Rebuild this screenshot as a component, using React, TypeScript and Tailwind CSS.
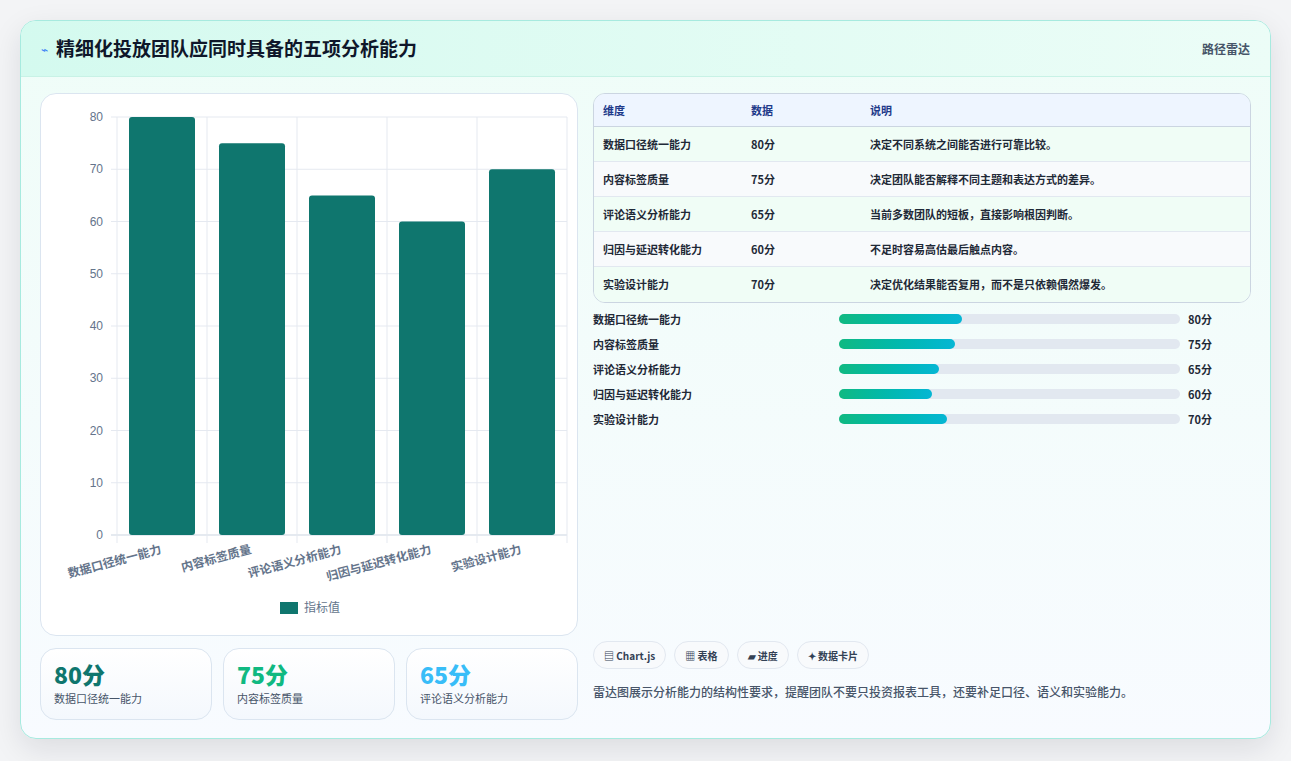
import React from 'react';

const rows = [
  { name: '数据口径统一能力', v: 80, note: '决定不同系统之间能否进行可靠比较。', w: 36 },
  { name: '内容标签质量', v: 75, note: '决定团队能否解释不同主题和表达方式的差异。', w: 34 },
  { name: '评论语义分析能力', v: 65, note: '当前多数团队的短板，直接影响根因判断。', w: 29.3 },
  { name: '归因与延迟转化能力', v: 60, note: '不足时容易高估最后触点内容。', w: 27.3 },
  { name: '实验设计能力', v: 70, note: '决定优化结果能否复用，而不是只依赖偶然爆发。', w: 31.7 },
];

const font = { fontFamily: '"Noto Sans CJK SC", "Noto Sans", sans-serif' };

function Chart() {
  const y0 = 534;
  const k = 418 / 80;
  return (
    <svg width="538" height="543" viewBox="40 93 538 543" style={font}>
      {[0, 10, 20, 30, 40, 50, 60, 70, 80].map((t) => (
        <g key={t}>
          <line x1="110" x2="566" y1={y0 - t * k} y2={y0 - t * k} stroke={t === 0 ? '#cbd5e1' : '#e5e9f0'} />
          <text x="102" y={y0 - t * k + 4} textAnchor="end" fontSize="12" fill="#64748b" fontFamily="Liberation Sans, sans-serif">{t}</text>
        </g>
      ))}
      {[116, 206, 296, 386, 476, 566].map((x) => (
        <line key={x} x1={x} x2={x} y1="116" y2="542" stroke="#e5e9f0" />
      ))}
      {rows.map((r, i) => {
        const cx = 161 + i * 90;
        const h = r.v * k;
        return (
          <g key={r.name}>
            <rect x={cx - 33} y={y0 - h} width="66" height={h} rx="3" fill="#0f766e" />
            <text x={cx} y="552" textAnchor="end" fontSize="12" fontWeight="600" fill="#64748b" transform={`rotate(-15 ${cx} 552)`}>{r.name}</text>
          </g>
        );
      })}
      <rect x="279" y="601" width="18" height="12" fill="#0f766e" />
      <text x="303" y="611" fontSize="12" fill="#64748b">指标值</text>
    </svg>
  );
}

export default function App() {
  return (
    <div className="min-h-[761px] bg-[#f3f4f6] p-5" style={font}>
      <div className="h-[719px] w-[1251px] overflow-hidden rounded-2xl border border-[#a7eadf] bg-gradient-to-b from-[#effdf8] to-[#f8fbff] shadow-[0_10px_30px_rgba(15,23,42,0.10)]">
        <div className="flex h-[56px] items-center justify-between border-b border-[#c8f2e6] bg-gradient-to-r from-[#d4faef] to-[#ecfdf7] px-5">
          <div className="flex items-center gap-2">
            <span className="text-[12px] text-[#3b82f6]">⌁</span>
            <h1 className="text-[19px] font-bold text-[#0f172a]">精细化投放团队应同时具备的五项分析能力</h1>
          </div>
          <span className="text-[12px] font-semibold text-[#475569]">路径雷达</span>
        </div>
        <div className="flex gap-[15px] px-[19px] pt-4">
          <div className="flex w-[538px] flex-col gap-3">
            <div className="h-[543px] rounded-2xl border border-[#dbe5f0] bg-white">
              <Chart />
            </div>
            <div className="flex gap-[11px]">
              {[
                { v: '80分', c: 'text-[#0f766e]', n: '数据口径统一能力' },
                { v: '75分', c: 'text-[#10b981]', n: '内容标签质量' },
                { v: '65分', c: 'text-[#38bdf8]', n: '评论语义分析能力' },
              ].map((s) => (
                <div key={s.n} className="h-[72px] w-[172px] rounded-2xl border border-[#dbe5f0] bg-gradient-to-b from-white to-[#f4f8fd] px-[13px] pt-[11px]">
                  <div className={`text-[23px] font-extrabold leading-[28px] ${s.c}`}>{s.v}</div>
                  <div className="mt-[2px] text-[11px] text-[#475569]">{s.n}</div>
                </div>
              ))}
            </div>
          </div>
          <div className="flex w-[658px] flex-col">
            <div className="overflow-hidden rounded-xl border border-[#cbd5e1] text-[11px]">
              <div className="flex h-[33px] items-center border-b border-[#cbd5e1] bg-[#eef5ff] font-semibold text-[#1e3a8a]">
                <div className="w-[157px] pl-[9px]">维度</div>
                <div className="w-[119px]">数据</div>
                <div>说明</div>
              </div>
              {rows.map((r, i) => (
                <div key={r.name} className={`flex h-[35px] items-center font-semibold text-[#1f2937] ${i % 2 ? 'bg-[#f8fafc]' : 'bg-[#f0fdf6]'} ${i < 4 ? 'border-b border-[#e2e8f0]' : ''}`}>
                  <div className="w-[157px] pl-[9px]">{r.name}</div>
                  <div className="w-[119px]">{r.v}分</div>
                  <div>{r.note}</div>
                </div>
              ))}
            </div>
            <div className="mt-[8px] flex flex-col gap-[9px]">
              {rows.map((r) => (
                <div key={r.name} className="flex h-4 items-center text-[11px] font-semibold text-[#1f2937]">
                  <div className="w-[246px]">{r.name}</div>
                  <div className="h-[10px] w-[341px] rounded-full bg-[#e2e8f0]">
                    <div className="h-full rounded-full bg-gradient-to-r from-[#10b981] to-[#06b6d4]" style={{ width: `${r.w}%` }} />
                  </div>
                  <div className="ml-2 font-bold">{r.v}分</div>
                </div>
              ))}
            </div>
            <div className="mt-auto flex gap-[8px] pt-0">
              {['▤ Chart.js', '▦ 表格', '▰ 进度', '✦ 数据卡片'].map((t) => (
                <span key={t} className="flex h-[28px] items-center rounded-full border border-[#e2e8f0] bg-[#f8fafc] px-[10px] text-[10px] font-bold text-[#334155]">{t}</span>
              ))}
            </div>
            <p className="mb-[19px] mt-[14px] text-[12px] font-medium text-[#475569]">雷达图展示分析能力的结构性要求，提醒团队不要只投资报表工具，还要补足口径、语义和实验能力。</p>
          </div>
        </div>
      </div>
    </div>
  );
}
